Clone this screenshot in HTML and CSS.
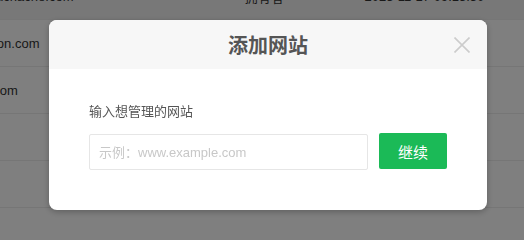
FILE: index.html
```html
<!DOCTYPE html>
<html lang="zh-CN">
<head>
<meta charset="utf-8">
<title>添加网站</title>
<link rel="stylesheet" href="styles.css">
</head>
<body>
<div class="page">
  <table class="sites">
    <tr class="row hover"><td class="c1">www.dakuaichache.com</td><td class="c2">拥有者</td><td class="c3">2023-11-17 09:15:30</td></tr>
    <tr class="row"><td class="c1">www.amazon.com</td><td class="c2"></td><td class="c3"></td></tr>
    <tr class="row"><td class="c1">www.ctrip.com</td><td class="c2"></td><td class="c3"></td></tr>
    <tr class="row"><td class="c1"></td><td class="c2"></td><td class="c3"></td></tr>
    <tr class="row"><td class="c1"></td><td class="c2"></td><td class="c3"></td></tr>
  </table>
</div>
<div class="mask"></div>
<div class="modal">
  <div class="modal-head">
    <h2 class="modal-title">添加网站</h2>
    <button class="close" aria-label="关闭">
      <svg width="16" height="16" viewBox="0 0 16 16"><path d="M0.5 0.5L15.5 15.5M15.5 0.5L0.5 15.5" stroke="#cccccc" stroke-width="1.6" fill="none"/></svg>
    </button>
  </div>
  <div class="modal-body">
    <div class="label">输入想管理的网站</div>
    <div class="form-row">
      <input class="site-input" type="text" placeholder="示例：www.example.com">
      <button class="go">继续</button>
    </div>
  </div>
</div>
</body>
</html>
```
FILE: styles.css
```css
html, body {
  margin: 0;
  padding: 0;
  background: #ffffff;
  font-family: "Liberation Sans", "Noto Sans CJK SC", sans-serif;
  overflow: hidden;
}
.page {
  width: 524px;
  height: 217px;
  overflow: hidden;
}
.sites {
  border-collapse: collapse;
  margin-top: -27px;
  margin-left: -66px;
  font-size: 13px;
  color: #333333;
}
.row td {
  height: 46px;
  padding: 0;
  border-bottom: 1px solid #ececec;
  vertical-align: middle;
  white-space: nowrap;
}
.row.hover td {
  background: #f0f0f0;
}
.c1 { width: 313px; }
.c2 { width: 121px; }
.c3 { width: 160px; }
.mask {
  position: fixed;
  inset: 0;
  background: rgba(0, 0, 0, 0.5);
}
.modal {
  position: fixed;
  left: 49px;
  top: 20px;
  width: 438px;
  height: 190px;
  background: #ffffff;
  border-radius: 8px;
  overflow: hidden;
  box-shadow: 0 2px 6px rgba(0, 0, 0, 0.25);
  display: flex;
  flex-direction: column;
}
.modal-head {
  height: 50px;
  background: #f7f7f7;
  display: flex;
  align-items: center;
  justify-content: center;
  position: relative;
}
.modal-title {
  margin: 0;
  font-size: 20px;
  font-weight: bold;
  color: #555555;
  font-family: "Noto Sans CJK SC", sans-serif;
  line-height: 26px;
}
.close {
  position: absolute;
  right: 17px;
  top: 17px;
  width: 16px;
  height: 16px;
  padding: 0;
  border: 0;
  background: none;
  display: block;
}
.close svg { display: block; }
.modal-body {
  padding: 33px 40px 40px;
  display: flex;
  flex-direction: column;
  gap: 13px;
}
.label {
  font-size: 13px;
  line-height: 18px;
  color: #555555;
  font-family: "Noto Sans CJK SC", sans-serif;
}
.form-row {
  display: flex;
  gap: 11px;
  align-items: flex-start;
}
.site-input {
  box-sizing: border-box;
  width: 280px;
  height: 36px;
  margin: 1px 0 0;
  border: 1px solid #e6e6e6;
  border-radius: 2px;
  padding: 0 9px;
  font-size: 13px;
  font-family: "Liberation Sans", "Noto Sans CJK SC", sans-serif;
  color: #333;
  outline: none;
}
.site-input::placeholder {
  color: #c8c8c8;
}
.go {
  width: 68px;
  height: 36px;
  border: 0;
  border-radius: 2px;
  background: #1bba57;
  color: #ffffff;
  font-size: 15px;
  font-family: "Noto Sans CJK SC", sans-serif;
  padding: 0;
}
```
